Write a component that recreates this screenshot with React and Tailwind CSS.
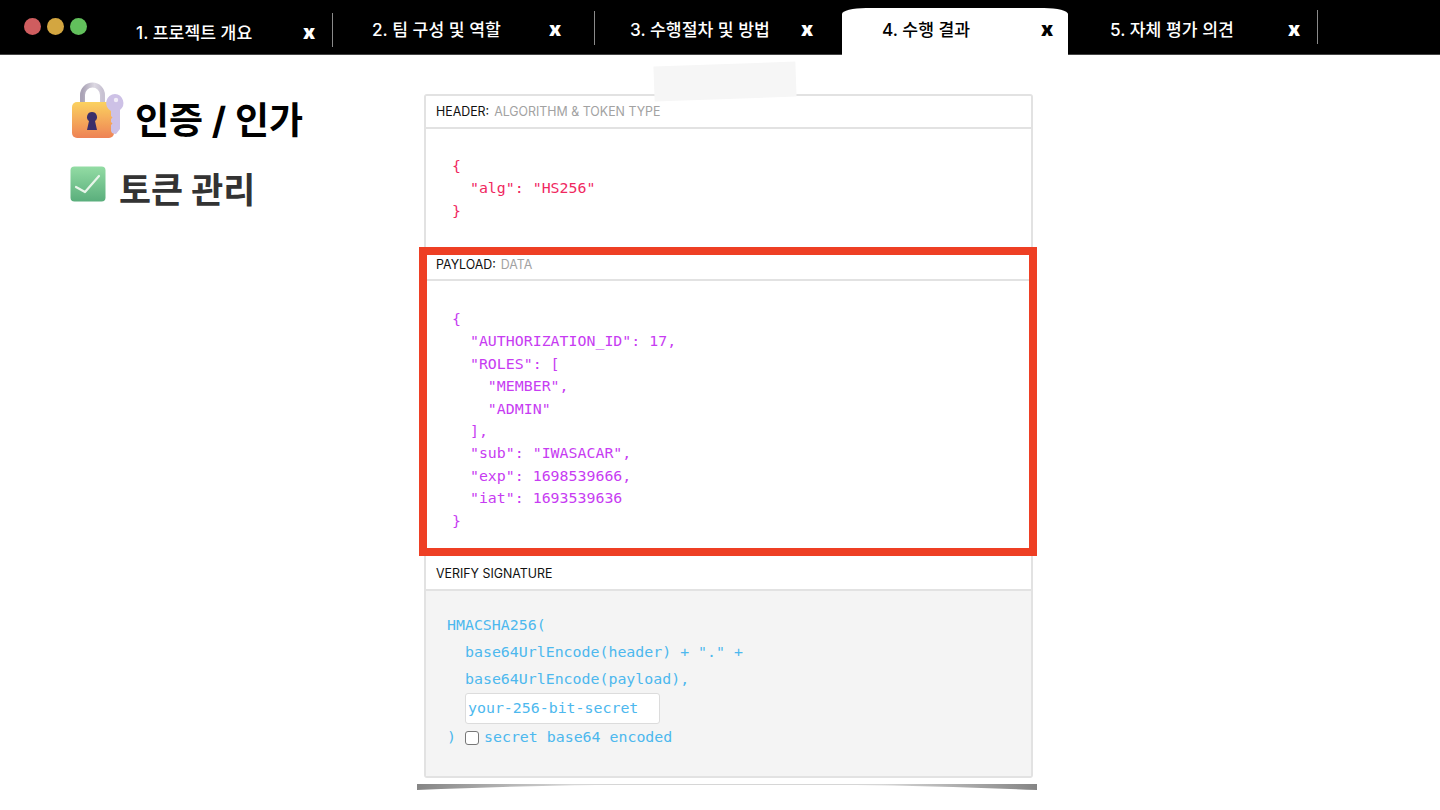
const KR = "font-['Inter','Noto_Sans_CJK_KR',sans-serif]";

const tabs = [
  { label: "1. 프로젝트 개요", width: "w-[245px]", pad: "pl-[49px] pt-[4px]", gap: "w-[167px]", divider: "top-[13px] right-[-1px]" },
  { label: "2. 팀 구성 및 역할", width: "w-[262px]", pad: "pl-[40px] pb-[2px]", gap: "w-[177px]", divider: "top-[11px] right-[-1px]" },
  { label: "3. 수행절차 및 방법", width: "w-[248px]", pad: "pl-[36px] pb-[2px]", gap: "w-[171px]" },
  { label: "4. 수행 결과", width: "w-[226px]", pad: "pl-[40px] pb-[3px]", gap: "w-[159px]", active: true },
  { label: "5. 자체 평가 의견", width: "w-[250px]", pad: "pl-[42px] pb-[2px]", gap: "w-[178px]", divider: "top-[10px] right-0" },
];

function LockIcon() {
  return (
    <svg width="56" height="58" viewBox="0 0 56 58" className="shrink-0">
      <defs>
        <linearGradient id="lockBody" x1="0" y1="0" x2="0" y2="1">
          <stop offset="0%" stopColor="#fbd25f" />
          <stop offset="100%" stopColor="#ee8256" />
        </linearGradient>
        <linearGradient id="shackle" x1="0" y1="0" x2="1" y2="0">
          <stop offset="0%" stopColor="#aaa3b6" />
          <stop offset="60%" stopColor="#dcd8e2" />
          <stop offset="100%" stopColor="#c8c2d2" />
        </linearGradient>
        <filter id="soft">
          <feGaussianBlur stdDeviation="0.4" />
        </filter>
      </defs>
      <g filter="url(#soft)">
        <path d="M12.500 22 V13 a10 10 0 0 1 20 0 V22" fill="none" stroke="url(#shackle)" strokeWidth="5" />
        <rect x="2" y="20" width="42" height="36" rx="5" fill="url(#lockBody)" />
        <path d="M22 30 a5 5 0 0 1 3 9 l2 9 h-10 l2 -9 a5 5 0 0 1 3 -9z" fill="#3a2f6b" />
        <path d="M45 12 a9 9 0 0 1 5 16 v19 l-4 5 q-2 0 -4 -1 l-1 -2 v-6 l1.500 -1.500 -1.500 -1.500 v-3 l1.500 -1.500 -1.500 -1.500 v-5 a9 9 0 0 1 4 -17z" fill="#cdc1e6" />
        <circle cx="46" cy="18" r="2.200" fill="#f1edf7" />
      </g>
    </svg>
  );
}

function CheckIcon() {
  return (
    <svg width="36" height="36" viewBox="0 0 36 36" className="shrink-0">
      <defs>
        <linearGradient id="checkBg" x1="0" y1="0" x2="0" y2="1">
          <stop offset="0%" stopColor="#93dca4" />
          <stop offset="100%" stopColor="#5aae7c" />
        </linearGradient>
      </defs>
      <rect x="0.500" y="0.500" width="35" height="35" rx="4" fill="url(#checkBg)" />
      <path d="M6 21 L15 26 L29 10" fill="none" stroke="#e8f5ea" strokeWidth="2.200" strokeLinecap="round" strokeLinejoin="round" />
    </svg>
  );
}

function SectionLabel({ title, sub, className = "h-[33px] pt-[2px]" }) {
  return (
    <div className={`flex items-center gap-[5px] border-b-2 border-[#e2e2e2] bg-white pl-[10px] text-[12.400px] text-[#111] ${className}`}>
      <span>{title}</span>
      {sub ? <span className="text-[#a2a2a2]">{sub}</span> : null}
    </div>
  );
}

export default function App() {
  return (
    <div className={`relative h-[810px] w-[1440px] overflow-hidden bg-white ${KR}`}>
      <header className="flex h-[55px] items-stretch border-b border-[#444] bg-black">
        <div className="flex w-[87px] shrink-0 gap-[6px] pl-6 pt-[18px]">
          <span className="h-[17px] w-[17px] rounded-full bg-[#cf5d5f]" />
          <span className="h-[17px] w-[17px] rounded-full bg-[#d3a640]" />
          <span className="h-[17px] w-[17px] rounded-full bg-[#62c05c]" />
        </div>
        {tabs.map((tab) => (
          <div key={tab.label} className={`relative flex shrink-0 items-end ${tab.width}`}>
            <div
              className={
                tab.active
                  ? `-mb-px flex h-[47px] w-full items-center rounded-t-[24px_6px] bg-white text-black ${tab.pad}`
                  : `flex h-[46px] w-full items-center text-white ${tab.pad}`
              }
            >
              <span className={`text-[17.200px] font-medium whitespace-nowrap ${tab.gap}`}>{tab.label}</span>
              <span className="-mt-[3px] text-[20px] font-black">x</span>
            </div>
            {tab.divider ? <span className={`absolute h-[34px] w-px bg-[#8a8a8a] ${tab.divider}`} /> : null}
          </div>
        ))}
      </header>

      <main className="flex">
        <section className="w-[424px] shrink-0 pl-[70px] pt-[27px]">
          <div className="flex h-[58px] items-center gap-[9px]">
            <LockIcon />
            <h1 className="pt-[18px] text-[37px] leading-none font-bold text-black whitespace-nowrap">인증 / 인가</h1>
          </div>
          <div className="mt-[26px] flex items-start gap-[13px]">
            <CheckIcon />
            <h2 className="pt-[4px] text-[34.800px] leading-[40px] font-bold text-[#333] whitespace-nowrap">토큰 관리</h2>
          </div>
        </section>

        <section className="mt-[39px] h-[684px] w-[609px] shrink-0 overflow-hidden rounded-[3px] border-2 border-[#e2e2e2]">
          <SectionLabel title="HEADER:" sub="ALGORITHM & TOKEN TYPE" />
          <pre className="h-[119px] pl-[26px] pt-[26px] font-['DejaVu_Sans_Mono',monospace] text-[14.900px] leading-[22.400px] text-[#f0285f]">{`{
  "alg": "HS256"
}`}</pre>
          <SectionLabel title="PAYLOAD:" sub="DATA" className="h-[33px] pt-[4px]" />
          <pre className="h-[276px] pl-[26px] pt-[27px] font-['DejaVu_Sans_Mono',monospace] text-[14.900px] leading-[22.400px] text-[#c73cf2]">{`{
  "AUTHORIZATION_ID": 17,
  "ROLES": [
    "MEMBER",
    "ADMIN"
  ],
  "sub": "IWASACAR",
  "exp": 1698539666,
  "iat": 1693539636
}`}</pre>
          <SectionLabel title="VERIFY SIGNATURE" className="h-[34px] pt-[3px]" />
          <div className="h-[185px] bg-[#f4f4f4] pl-[21px] pt-[21px] font-['DejaVu_Sans_Mono',monospace] text-[14.900px] leading-[27px] text-[#4db8ee]">
            <div>HMACSHA256(</div>
            <div className="pl-[18px]">{'base64UrlEncode(header) + "." +'}</div>
            <div className="pl-[18px]">base64UrlEncode(payload),</div>
            <div className="ml-[18px] flex h-[31px] w-[195px] items-center rounded-[3px] border border-[#dcdcdc] bg-white pl-[2px]">
              your-256-bit-secret
            </div>
            <div className="flex h-[27px] items-center">
              <span className="w-[18px]">)</span>
              <span className="h-[14px] w-[14px] rounded-[3px] border border-[#777] bg-white" />
              <span className="ml-[5px]">secret base64 encoded</span>
            </div>
          </div>
        </section>
      </main>

      {/* 이미지 위에 겹친 장식들 */}
      <div className="absolute left-[654px] top-[64px] h-[35px] w-[142px] -rotate-2 bg-[#f6f6f6]" />
      <div className="absolute left-[419px] top-[247px] h-[309px] w-[618px] border-[8px] border-[#ee3f24]" />
      <svg width="622" height="8" viewBox="0 0 622 8" className="absolute left-[416px] top-[783px]">
        <defs>
          <linearGradient id="paperShadow" x1="0" y1="0" x2="1" y2="0">
            <stop offset="0%" stopColor="#858585" />
            <stop offset="25%" stopColor="#d6d6d6" />
            <stop offset="75%" stopColor="#d6d6d6" />
            <stop offset="100%" stopColor="#858585" />
          </linearGradient>
        </defs>
        <path d="M1 1 H621 V7 Q520 3 440 2 H180 Q100 3 1 7z" fill="url(#paperShadow)" />
      </svg>
    </div>
  );
}
